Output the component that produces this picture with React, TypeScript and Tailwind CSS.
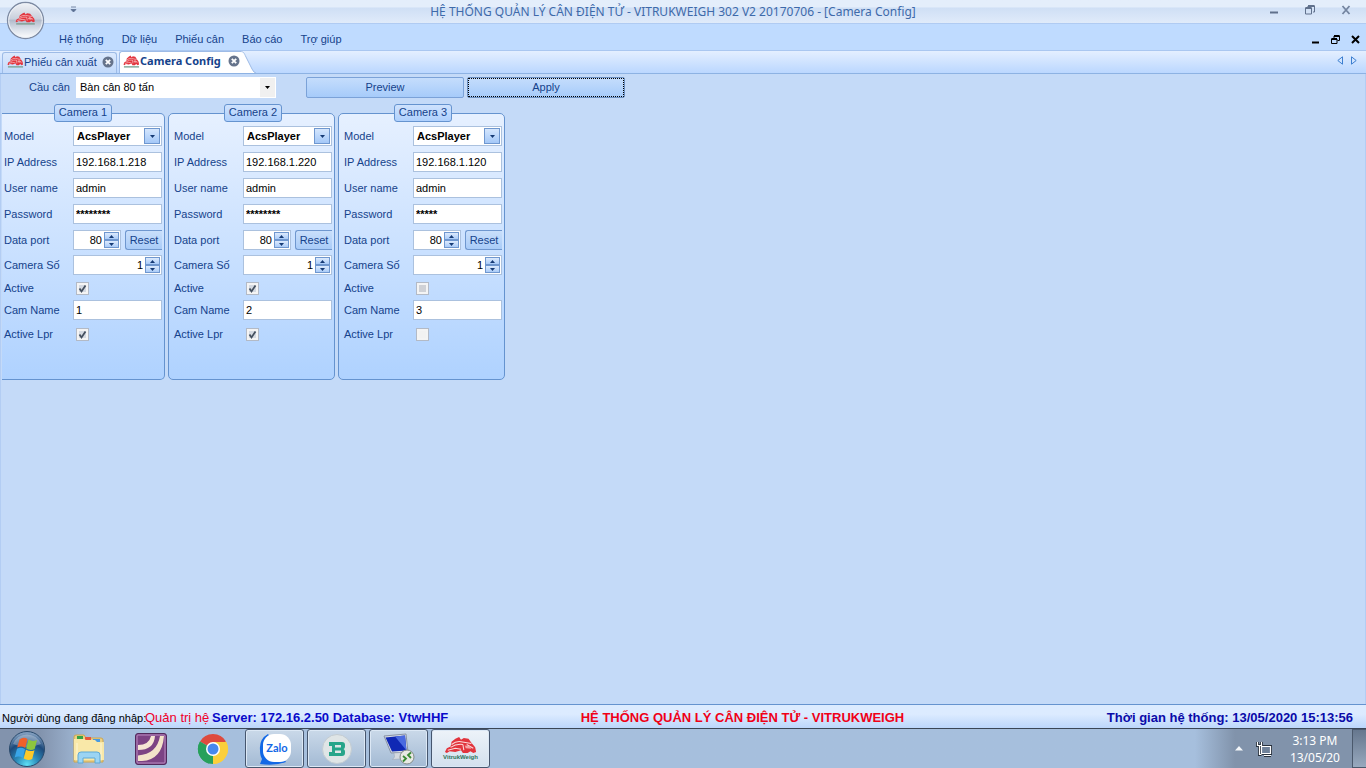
import React from "react";

type Camera = {
  id: number;
  ip: string;
  password: string;
  active: boolean;
  activeLocked: boolean;
  lpr: boolean;
};

const cameras: Camera[] = [
  { id: 1, ip: "192.168.1.218", password: "********", active: true, activeLocked: false, lpr: true },
  { id: 2, ip: "192.168.1.220", password: "********", active: true, activeLocked: false, lpr: true },
  { id: 3, ip: "192.168.1.120", password: "*****", active: false, activeLocked: true, lpr: false },
];

function TruckShape() {
  return (
    <>
      <path d="M1 17L3 13 7 11 8 6 12 3 16 1 18 4 21 2 26 3 29 7 33 12 34 17 31 18 28 16 25 18H20L18 15 12 17 6 16 3 18Z" fill="#e2343d" />
      <path d="M8 9Q13 5 18 6L29 8M7 12Q13 8 20 9M20 9l1 6M24 9l7 4M4 15l8-2 6 1" stroke="#fbdcdc" strokeWidth="1.100" fill="none" />
      <path d="M22 10l5 .5 2 3-6-.5Z" fill="#f3a3a6" />
    </>
  );
}

function TruckLogo({ className }: { className: string }) {
  return (
    <svg viewBox="0 0 36 23" preserveAspectRatio="none" className={className} aria-hidden="true">
      <TruckShape />
      <path d="M2 21h32" stroke="#7da596" strokeWidth="2.500" />
    </svg>
  );
}

function CloseDot() {
  return (
    <svg viewBox="0 0 12 12" className="size-3" aria-hidden="true">
      <circle cx="6" cy="6" r="5.5" fill="#66748c" />
      <path d="M3.800 3.800l4.400 4.400M8.200 3.800l-4.400 4.400" stroke="#fff" strokeWidth="1.8" />
    </svg>
  );
}

function TitleBar() {
  return (
    <header className="relative flex h-6 shrink-0 items-center border-b border-[#b0cbf2] bg-linear-to-b from-[#e4eefb] from-30% via-[#cfdff5] via-35% to-[#e0ebfa] pr-[15px]">
      <button aria-label="Menu" className="absolute top-0 left-1.5 z-10">
        <svg viewBox="0 0 40 40" className="size-10">
          <defs>
            <linearGradient id="orb" x1="0" y1="0" x2="0" y2="1">
              <stop offset="0" stopColor="#f1f3f7" />
              <stop offset="0.45" stopColor="#c9d0dc" />
              <stop offset="0.5" stopColor="#b3bccc" />
              <stop offset="0.75" stopColor="#dbe1ea" />
              <stop offset="1" stopColor="#fff" />
            </linearGradient>
          </defs>
          <circle cx="19.500" cy="20.500" r="18" fill="url(#orb)" stroke="#7e8ba3" strokeWidth="1.3" />
          <circle cx="19.500" cy="20.500" r="16.8" fill="none" stroke="#eef2f8" strokeWidth="1" />
          <svg x="9" y="12" width="21" height="13" viewBox="0 0 36 23" preserveAspectRatio="none">
            <TruckShape />
            <path d="M2 21h32" stroke="#7f9f92" strokeWidth="2.500" />
          </svg>
        </svg>
      </button>
      <button aria-label="Customize" className="ml-[70px]">
        <svg viewBox="0 0 7 7" className="mb-1 h-[7px] w-[7px]">
          <path d="M1 1h5M1 3.500h5L3.500 6Z" stroke="#5a6f92" strokeWidth="0.800" fill="#5a6f92" />
        </svg>
      </button>
      <h1 className="flex-1 text-center font-['Noto_Sans',sans-serif] text-xs text-[#3e6aaa]">
        HỆ THỐNG QUẢN LÝ CÂN ĐIỆN TỬ - VITRUKWEIGH 302 V2 20170706 - [Camera Config]
      </h1>
      <div className="flex items-center gap-[26px] pb-1">
        <button aria-label="Minimize">
          <svg viewBox="0 0 10 10" className="size-2.5"><path d="M1 7.500h8" stroke="#60718c" strokeWidth="2" /></svg>
        </button>
        <button aria-label="Restore">
          <svg viewBox="0 0 10 10" className="size-2.5" fill="none" stroke="#60718c">
            <path d="M.500 3h6v6h-6zM3 2V1h6.500v6H8" /><path d="M.500 3h6M3 1h6.500" strokeWidth="1.800" />
          </svg>
        </button>
        <button aria-label="Close">
          <svg viewBox="0 0 10 10" className="size-2.5"><path d="M1.500 1l7 8M8.500 1l-7 8" stroke="#7485a0" strokeWidth="1.800" /></svg>
        </button>
      </div>
    </header>
  );
}

function MenuBar() {
  return (
    <nav className="flex h-[26px] shrink-0 items-center justify-between bg-[#bfdbff] pr-1.5 pl-[59px] text-[#15428b]">
      <ul className="flex gap-[18px] pt-1 text-[11px]">
        {["Hệ thống", "Dữ liệu", "Phiếu cân", "Báo cáo", "Trợ giúp"].map((item) => (
          <li key={item}>
            <a href="#">{item}</a>
          </li>
        ))}
      </ul>
      <div className="flex items-center gap-[11px] pt-1 text-black">
        <button aria-label="Minimize window">
          <svg viewBox="0 0 9 9" className="size-[9px]"><path d="M1 7.500h7" stroke="#000" strokeWidth="2" /></svg>
        </button>
        <button aria-label="Restore window">
          <svg viewBox="0 0 9 9" className="size-[9px]" fill="none" stroke="#000">
            <path d="M.500 4h5.500v4.500H.500zM3 3.500V1h5.500v4.500H6.500" /><path d="M.500 4H6M3 1h5.500" strokeWidth="1.800" />
          </svg>
        </button>
        <button aria-label="Close window">
          <svg viewBox="0 0 9 9" className="size-[9px]"><path d="M1 1l7 7M8 1L1 8" stroke="#000" strokeWidth="2" /></svg>
        </button>
      </div>
    </nav>
  );
}

function TabStrip() {
  return (
    <div className="flex h-6 shrink-0 items-end border-y border-t-[#aac7f0] border-b-[#8db2e3] bg-linear-to-b from-[#e4efff] to-[#bbd7ff] pl-0.5">
      <div className="flex h-[21px] items-center rounded-t-[3px] border border-b-0 border-[#9ebbe6] bg-linear-to-b from-[#dbe9fd] to-[#c2dafb] pr-0.5 pb-0.5 pl-1 text-[11px] text-[#15428b]">
        <TruckLogo className="mb-0.5 h-[13px] w-[17px]" />
        <a href="#" className="w-[78px] whitespace-nowrap">Phiếu cân xuất</a>
        <button aria-label="Close Phiếu cân xuất"><CloseDot /></button>
      </div>
      <div className="ml-0.5 flex h-[22px]">
        <div className="flex items-center rounded-tl-[3px] border-t border-l border-[#9ebbe6] bg-white pb-[3px] pl-[3px] text-[#15428b]">
          <TruckLogo className="h-[13px] w-[17px]" />
          <a href="#" className="w-[88px] font-['Noto_Sans',sans-serif] text-[11px] font-bold whitespace-nowrap">Camera Config</a>
          <button aria-label="Close Camera Config"><CloseDot /></button>
        </div>
        <svg viewBox="0 0 16 22" className="h-[22px] w-4" aria-hidden="true">
          <path d="M0 0C4 0 4 2 6 6L12 18Q14 22 16 22H0Z" fill="#fff" />
          <path d="M0 .5C4 .5 4 2 6 6L12 18Q14 22 16 22" fill="none" stroke="#9ebbe6" />
        </svg>
      </div>
      <div className="mr-[9px] mb-2 ml-auto flex gap-2">
        <button aria-label="Previous tab">
          <svg viewBox="0 0 6 9" className="h-[9px] w-1.5"><path d="M5.500 .8v7.400L.8 4.500Z" fill="none" stroke="#3d7fd0" /></svg>
        </button>
        <button aria-label="Next tab">
          <svg viewBox="0 0 6 9" className="h-[9px] w-1.5"><path d="M.5 .8v7.400l4.700-3.700Z" fill="none" stroke="#3d7fd0" /></svg>
        </button>
      </div>
    </div>
  );
}

function Row({ label, htmlFor, height = "h-[26px]", children }: { label: string; htmlFor: string; height?: string; children: React.ReactNode }) {
  return (
    <div className={`flex items-center ${height}`}>
      <label htmlFor={htmlFor} className="w-[69px] shrink-0 whitespace-nowrap">{label}</label>
      {children}
    </div>
  );
}

const box = "h-5 w-[89px] border border-[#abc1de] bg-white px-0.5 text-black outline-none";

function Spinner({ id, value, width }: { id: string; value: string; width: string }) {
  return (
    <div className={`flex h-5 border border-[#abc1de] bg-white ${width}`}>
      <input id={id} inputMode="numeric" defaultValue={value} className="w-full min-w-0 flex-1 pr-0.5 text-right text-black outline-none" />
      <div className="flex flex-col py-px pr-px">
        {["up", "down"].map((dir) => (
          <button key={dir} aria-label={dir} className="flex h-2 w-[15px] items-center justify-center border border-[#6f97cf] bg-linear-to-b from-[#dceafd] to-[#a9cbf8]">
            <svg viewBox="0 0 5 3" className="h-[3px] w-[5px]">
              <path d={dir === "up" ? "M0 3h5L2.500 0Z" : "M0 0h5L2.500 3Z"} fill="#153a75" />
            </svg>
          </button>
        ))}
      </div>
    </div>
  );
}

function Check({ id, checked, locked }: { id: string; checked: boolean; locked?: boolean }) {
  return (
    <span className="relative ml-[3px] block size-[13px]">
      <input
        id={id}
        type="checkbox"
        defaultChecked={checked}
        className={`peer block size-[13px] appearance-none border border-[#b3bac6] shadow-[inset_0_0_0_2px_#f4f4f4] ${locked ? "bg-[#cfd1d6]" : "bg-[#f2f2f2] checked:bg-[#d5dae2]"}`}
      />
      <svg viewBox="0 0 13 13" className="pointer-events-none absolute inset-0 hidden size-[13px] peer-checked:block">
        <path d="M3.500 6.500L5.500 9.500L9.500 3.500" fill="none" stroke="#45505f" strokeWidth="1.800" />
      </svg>
    </span>
  );
}

function CameraPanel({ cam }: { cam: Camera }) {
  const k = `cam${cam.id}`;
  return (
    <fieldset className="h-[276px] w-[167px] rounded-[5px] border border-[#6593cf] bg-linear-to-b from-[#e6f0ff] to-[#afd2ff] pt-px pr-0.5 pl-[5px] first:w-[163px] first:rounded-l-none first:border-l-0 first:pl-0.5">
      <legend className="mx-auto h-[18px] w-[58px] rounded-[3px] border border-[#6593cf] bg-linear-to-b from-[#cfe2fd] to-[#aed0fd] text-center leading-[15px]">
        Camera {cam.id}
      </legend>
      <Row label="Model" htmlFor={`${k}-model`}>
        <div className="relative">
          <select id={`${k}-model`} className={`${box} appearance-none pl-[3px] font-bold`}>
            <option>AcsPlayer</option>
          </select>
          <span className="pointer-events-none absolute top-0.5 right-0.5 flex size-4 items-center justify-center border border-[#6f97cf] bg-linear-to-b from-[#d5e6fd] to-[#a4c8f8]">
            <svg viewBox="0 0 5 3" className="h-[3px] w-[5px]"><path d="M0 0h5L2.500 3Z" fill="#153a75" /></svg>
          </span>
        </div>
      </Row>
      <Row label="IP Address" htmlFor={`${k}-ip`}>
        <input id={`${k}-ip`} defaultValue={cam.ip} className={box} />
      </Row>
      <Row label="User name" htmlFor={`${k}-user`}>
        <input id={`${k}-user`} defaultValue="admin" className={box} />
      </Row>
      <Row label="Password" htmlFor={`${k}-pass`}>
        <input id={`${k}-pass`} defaultValue={cam.password} autoComplete="off" className={`${box} font-bold`} />
      </Row>
      <Row label="Data port" htmlFor={`${k}-port`}>
        <Spinner id={`${k}-port`} value="80" width="w-12" />
        <button className="ml-1 h-5 w-[37px] rounded-l-[3px] border border-r-0 border-[#6f97cf] bg-linear-to-b from-[#c9dffb] to-[#a8cbf8]">Reset</button>
      </Row>
      <Row label="Camera Số" htmlFor={`${k}-no`} height="h-6">
        <Spinner id={`${k}-no`} value="1" width="w-[89px]" />
      </Row>
      <Row label="Active" htmlFor={`${k}-active`} height="h-[22px]">
        <Check id={`${k}-active`} checked={cam.active} locked={cam.activeLocked} />
      </Row>
      <Row label="Cam Name" htmlFor={`${k}-name`} height="h-[22px]">
        <input id={`${k}-name`} defaultValue={cam.id} className={box} />
      </Row>
      <Row label="Active Lpr" htmlFor={`${k}-lpr`}>
        <Check id={`${k}-lpr`} checked={cam.lpr} />
      </Row>
    </fieldset>
  );
}

function StatusBar() {
  return (
    <footer className="grid h-6 shrink-0 grid-cols-[1fr_auto_1fr] items-center border-t border-[#6593cf] bg-linear-to-b from-[#dcebff] from-40% to-[#bcd6fb] pt-0.5 pr-[13px] pl-0.5 text-[13px] font-bold whitespace-nowrap">
      <div className="flex items-center">
        <span className="w-[143px] pt-0.5 text-[11px] font-normal text-black">Người dùng đang đăng nhâp:</span>
        <span className="w-[67px] font-normal text-[#f0002a]">Quản trị hệ</span>
        <span className="text-[#0a0aca]">Server: 172.16.2.50 Database: VtwHHF</span>
      </div>
      <span className="pl-[130px] text-[#f00018]">HỆ THỐNG QUẢN LÝ CÂN ĐIỆN TỬ - VITRUKWEIGH</span>
      <time className="text-right text-[#0a0aa8]">Thời gian hệ thống: 13/05/2020 15:13:56</time>
    </footer>
  );
}

const taskButton = "flex h-[39px] w-[59px] items-center justify-center rounded-[3px] border border-[#46566e] shadow-[inset_0_0_0_1px_#dce8f5]";

function Taskbar() {
  return (
    <div className="flex h-10 shrink-0 items-center border-t border-[#3b4656] bg-linear-to-r from-[#8293ad] from-[40px] to-[#a6bfdd] to-[90px]">
      <button aria-label="Start" className="ml-2">
        <svg viewBox="0 0 38 38" className="size-[38px]">
          <defs>
            <radialGradient id="start" cx="0.5" cy="0.95" r="0.9">
              <stop offset="0" stopColor="#5fe0f5" />
              <stop offset="0.35" stopColor="#2c8cba" />
              <stop offset="0.7" stopColor="#1d4a7c" />
              <stop offset="1" stopColor="#7f9cbd" />
            </radialGradient>
          </defs>
          <circle cx="19" cy="19" r="17.500" fill="url(#start)" stroke="#2a4a6c" />
          <path d="M5 14a15 15 0 0 1 28 0q-14 6-28 0Z" fill="#fff" opacity="0.280" />
          <path d="M11.500 9.500q4-3 8-.5l-2.300 9q-3.500-2.500-8-.5Z" fill="#f0602a" />
          <path d="M20.500 9.500q4 2.500 8.500.5l-2.300 9q-4.400 2-8.500-.5Z" fill="#8cc63e" />
          <path d="M9 18.700q4-2 8 .5l-2.300 8.800q-3.500-2.500-8-.5Z" fill="#39a5e8" />
          <path d="M18 19.700q4 2.500 8.500.5l-2.300 8.800q-4.400 2-8.500-.5Z" fill="#fdc929" />
        </svg>
      </button>
      <button aria-label="Explorer" className="ml-[26px]">
        <svg viewBox="0 0 34 32" className="h-8 w-[34px]">
          <path d="M2 4q0-2 2-2h8l2 3h15q2 0 2 2v22H2Z" fill="#ecd084" stroke="#cba650" />
          <path d="M5 3h6v3H5z" fill="#35a348" /><path d="M13 4h6v3h-6z" fill="#e7573c" /><path d="M21 6h7v3h-7z" fill="#4a9be0" />
          <path d="M2 9V6h10l2 1h9l2 2h7v18H2Z" fill="#f9e8a8" />
          <path d="M5 10v17M29 10v17" stroke="#fdf6d5" />
          <path d="M6 30v-8q0-3 3-3h16q3 0 3 3v8h-5v-5H11v5Z" fill="#9bd4f3" stroke="#5da9d8" />
        </svg>
      </button>
      <button aria-label="Remote tool" className="ml-[29px]">
        <svg viewBox="0 0 32 32" className="size-8">
          <rect x="0.500" y="0.500" width="31" height="31" rx="2.500" fill="#7c4384" stroke="#51295b" />
          <rect x="2" y="2" width="28" height="28" rx="1" fill="none" stroke="#b98cc0" />
          <path d="M3 12Q14 12 16 3h4Q19 17 3 17Z" fill="#f6e6d4" />
          <path d="M3 22.500Q22 21 25 3h4Q27 27 7 28H3Z" fill="#f3e3c9" />
        </svg>
      </button>
      <button aria-label="Chrome" className="ml-[30px]">
        <svg viewBox="0 0 32 32" className="size-8">
          <path d="M16 16L3 8.500A15 15 0 0 1 29 8.500Z" fill="#de4b3e" />
          <path d="M16 16l13-7.500A15 15 0 0 1 16 31Z" fill="#fbcf3b" />
          <path d="M16 16v15A15 15 0 0 1 3 8.500Z" fill="#27a05b" />
          <path d="M16 9h13.200A15 15 0 0 1 16 31l6-11Z" fill="#fbcf3b" />
          <path d="M3 8.500L10 20l6 3-4 7.600A15 15 0 0 1 3 8.500Z" fill="#27a05b" />
          <circle cx="16" cy="16" r="7" fill="#fff" />
          <circle cx="16" cy="16" r="5.500" fill="#4788ed" />
        </svg>
      </button>
      <div className="ml-4 flex gap-[3px]">
        <button aria-label="Zalo" className={`${taskButton} bg-linear-to-b from-[#cad9e9] to-[#a3bad4]`}>
          <svg viewBox="0 0 34 34" className="size-[34px]">
            <path d="M10 2Q1 7 2 18q0 6 2 9l-2 5q15 2 26-2Z" fill="#1268e6" />
            <rect x="5" y="2" width="28" height="28" rx="11" fill="#fff" />
            <text x="19" y="20" textAnchor="middle" fontFamily="Lato, sans-serif" fontWeight="700" fontSize="11" fill="#1268e6">Zalo</text>
          </svg>
        </button>
        <button aria-label="B" className={`${taskButton} bg-linear-to-b from-[#cad9e9] to-[#a3bad4]`}>
          <svg viewBox="0 0 32 32" className="size-8">
            <circle cx="16" cy="16" r="14.500" fill="#dfe5e6" stroke="#c3ccd2" />
            <path d="M8 9h13q3 0 3 3v1.500q0 2-1.500 2.500 1.500.5 1.500 2.500V20q0 3-3 3H8v-4h3v-6H8Zm6 3v2.500h6V12Zm0 5.500V20h6v-2.500Z" fillRule="evenodd" fill="#27a58a" />
          </svg>
        </button>
        <button aria-label="Remote desktop" className={`${taskButton} bg-linear-to-b from-[#cad9e9] to-[#a3bad4]`}>
          <svg viewBox="0 0 32 32" className="size-8">
            <path d="M1 3l22-2 2 18-17 1Z" fill="#d9dde4" stroke="#8792a5" />
            <path d="M2.500 4.500l19.500-2 1.500 15L9 18.500Z" fill="#1028b4" />
            <path d="M12 3.500l10-1 1.500 15Z" fill="#4a6ae0" />
            <path d="M11 20l7-.5.500 4 4 2-13 1 2-2.500Z" fill="#d5dae0" stroke="#98a2b2" strokeWidth="0.500" />
            <circle cx="24" cy="24" r="7" fill="#e8e9e4" stroke="#848c88" />
            <path d="M20 23l3 2.500-3 3M28 19.500l-3 2.500 3 3" fill="none" stroke="#388a32" strokeWidth="1.800" />
          </svg>
        </button>
        <button aria-label="VitrukWeigh" className={`${taskButton} flex-col bg-linear-to-b from-[#edf3f9] to-[#d3e0ee]`}>
          <svg viewBox="0 0 36 19" className="h-[18px] w-[34px]" aria-hidden="true"><TruckShape /></svg>
          <span className="font-['Liberation_Sans',sans-serif] text-[6px] leading-[7px] font-bold text-[#2c7158]">VitrukWeigh</span>
        </button>
      </div>
      <div className="ml-auto flex h-full items-center bg-linear-to-r from-transparent to-[#8193ab] to-[40px] pl-10 text-white">
        <button aria-label="Show hidden icons">
          <svg viewBox="0 0 8 5" className="h-[5px] w-2"><path d="M0 4.500h8L4 0Z" fill="#f4f7fa" /></svg>
        </button>
        <svg viewBox="0 0 16 16" className="ml-[13px] size-4" fill="none" aria-label="Network">
          <path d="M5.500 5.500h9v7h-9zM8 14.500h7M1.500 1v3.500h4V1M3.500 4.500v9h2" stroke="#28313d" strokeWidth="3" />
          <path d="M5.500 5.500h9v7h-9z" fill="#6f8199" />
          <path d="M5.500 5.500h9v7h-9zM8 14.500h7M1.500 1v3.500h4V1M3.500 4.500v9h2" stroke="#fff" strokeWidth="1.200" />
        </svg>
        <div className="ml-[18px] text-center font-['Noto_Sans',sans-serif] text-xs leading-[17px]">
          <div>3:13 PM</div>
          <div>13/05/20</div>
        </div>
        <button aria-label="Show desktop" className="ml-3 h-full w-[14px] border border-r-0 border-[#4b596c] bg-linear-to-b from-[#66778e] to-[#98a9be]" />
      </div>
    </div>
  );
}

export default function App() {
  return (
    <div className="flex min-h-screen flex-col overflow-hidden bg-[#c4daf8] font-['Liberation_Sans',Arial,sans-serif]">
      <TitleBar />
      <MenuBar />
      <TabStrip />
      <main className="flex-1 border-x border-[#b3cdf3] pl-px text-[11px] text-[#15428b]">
        <div className="flex items-center pt-[3px] pl-[27px]">
          <label htmlFor="scale" className="w-[47px]">Cầu cân</label>
          <div className="relative">
            <select id="scale" className="block h-[21px] w-[200px] appearance-none bg-white pl-1 text-black outline-none">
              <option>Bàn cân 80 tấn</option>
            </select>
            <span className="pointer-events-none absolute inset-y-px right-px flex w-[15px] items-center justify-center bg-[#f0f0f0]">
              <svg viewBox="0 0 5 3" className="h-[3px] w-[5px]"><path d="M0 0h5L2.500 3Z" fill="#000" /></svg>
            </span>
          </div>
          <button className="ml-[30px] h-[21px] w-[158px] rounded-xs border border-[#7ba2d8] bg-linear-to-b from-[#c5ddfc] to-[#a6cbfa]">Preview</button>
          <button className="ml-[3px] h-[21px] w-[158px] rounded-xs border border-[#6a8ebf] bg-linear-to-b from-[#c5ddfc] to-[#a6cbfa] outline-1 -outline-offset-2 outline-black outline-dotted">Apply</button>
        </div>
        <div className="flex gap-[3px] pt-1.5">
          {cameras.map((cam) => (
            <CameraPanel key={cam.id} cam={cam} />
          ))}
        </div>
      </main>
      <StatusBar />
      <Taskbar />
    </div>
  );
}
